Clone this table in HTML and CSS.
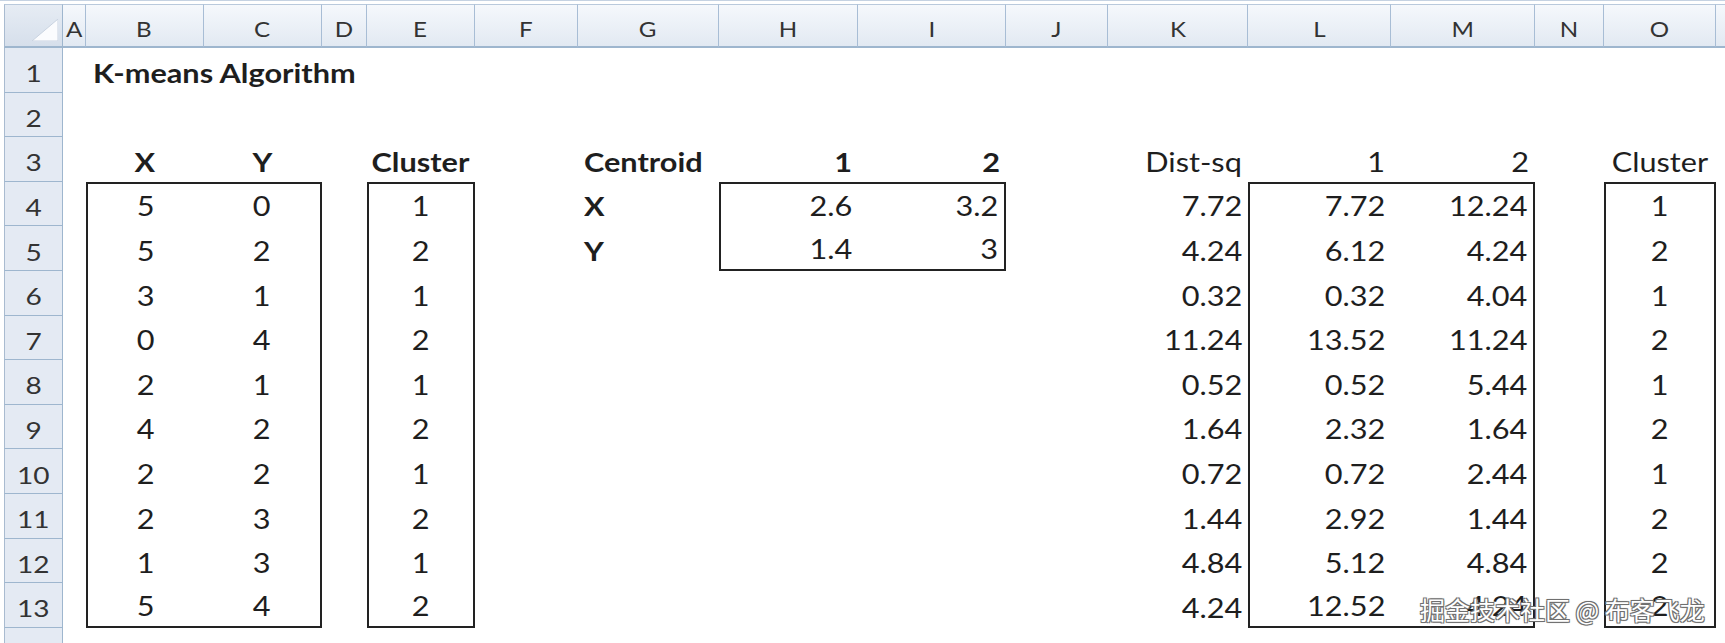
FILE: index.html
```html
<!DOCTYPE html>
<html>
<head>
<meta charset="utf-8">
<link rel="stylesheet" href="styles.css">
</head>
<body>
<div class="sheet">
  <div class="row head">
    <div class="corner"><svg class="tri" width="26" height="22" viewBox="0 0 26 22"><polygon points="0,22 26,22 26,0" fill="#fbfcfe" stroke="#c9d3e0" stroke-width="1"/></svg></div>
    <div class="ch"><span>A</span></div><div class="ch"><span>B</span></div><div class="ch"><span>C</span></div><div class="ch"><span>D</span></div><div class="ch"><span>E</span></div><div class="ch"><span>F</span></div><div class="ch"><span>G</span></div><div class="ch"><span>H</span></div><div class="ch"><span>I</span></div><div class="ch"><span>J</span></div><div class="ch"><span>K</span></div><div class="ch"><span>L</span></div><div class="ch"><span>M</span></div><div class="ch"><span>N</span></div><div class="ch"><span>O</span></div><div class="ch last"></div>
  </div>

  <div class="row">
    <div class="rh"><span>1</span></div><div></div><div class="c l b title"><span>K-means Algorithm</span></div><div></div><div></div><div></div><div></div><div></div><div></div><div></div><div></div><div></div><div></div><div></div><div></div><div></div><div></div>
  </div>

  <div class="row">
    <div class="rh"><span>2</span></div><div></div><div></div><div></div><div></div><div></div><div></div><div></div><div></div><div></div><div></div><div></div><div></div><div></div><div></div><div></div><div></div>
  </div>

  <div class="row">
    <div class="rh"><span>3</span></div><div></div>
    <div class="c m b"><span>X</span></div><div class="c m b"><span>Y</span></div><div></div><div class="c m b"><span>Cluster</span></div><div></div>
    <div class="c l b"><span>Centroid</span></div><div class="c r b"><span>1</span></div><div class="c r b"><span>2</span></div><div></div>
    <div class="c r"><span>Dist-sq</span></div><div class="c r"><span>1</span></div><div class="c r"><span>2</span></div><div></div><div class="c m"><span>Cluster</span></div><div></div>
  </div>

  <div class="row">
    <div class="rh"><span>4</span></div><div></div>
    <div class="c m bl bt"><span>5</span></div><div class="c m br bt"><span>0</span></div><div></div><div class="c m bl br bt"><span>1</span></div><div></div>
    <div class="c l b"><span>X</span></div><div class="c r bl bt"><span>2.6</span></div><div class="c r br bt"><span>3.2</span></div><div></div>
    <div class="c r"><span>7.72</span></div><div class="c r bl bt"><span>7.72</span></div><div class="c r br bt"><span>12.24</span></div><div></div><div class="c m bl br bt"><span>1</span></div><div></div>
  </div>

  <div class="row">
    <div class="rh"><span>5</span></div><div></div>
    <div class="c m bl"><span>5</span></div><div class="c m br"><span>2</span></div><div></div><div class="c m bl br"><span>2</span></div><div></div>
    <div class="c l b"><span>Y</span></div><div class="c r bl bb"><span>1.4</span></div><div class="c r br bb"><span>3</span></div><div></div>
    <div class="c r"><span>4.24</span></div><div class="c r bl"><span>6.12</span></div><div class="c r br"><span>4.24</span></div><div></div><div class="c m bl br"><span>2</span></div><div></div>
  </div>

  <div class="row">
    <div class="rh"><span>6</span></div><div></div>
    <div class="c m bl"><span>3</span></div><div class="c m br"><span>1</span></div><div></div><div class="c m bl br"><span>1</span></div><div></div>
    <div></div><div></div><div></div><div></div>
    <div class="c r"><span>0.32</span></div><div class="c r bl"><span>0.32</span></div><div class="c r br"><span>4.04</span></div><div></div><div class="c m bl br"><span>1</span></div><div></div>
  </div>

  <div class="row">
    <div class="rh"><span>7</span></div><div></div>
    <div class="c m bl"><span>0</span></div><div class="c m br"><span>4</span></div><div></div><div class="c m bl br"><span>2</span></div><div></div>
    <div></div><div></div><div></div><div></div>
    <div class="c r"><span>11.24</span></div><div class="c r bl"><span>13.52</span></div><div class="c r br"><span>11.24</span></div><div></div><div class="c m bl br"><span>2</span></div><div></div>
  </div>

  <div class="row">
    <div class="rh"><span>8</span></div><div></div>
    <div class="c m bl"><span>2</span></div><div class="c m br"><span>1</span></div><div></div><div class="c m bl br"><span>1</span></div><div></div>
    <div></div><div></div><div></div><div></div>
    <div class="c r"><span>0.52</span></div><div class="c r bl"><span>0.52</span></div><div class="c r br"><span>5.44</span></div><div></div><div class="c m bl br"><span>1</span></div><div></div>
  </div>

  <div class="row">
    <div class="rh"><span>9</span></div><div></div>
    <div class="c m bl"><span>4</span></div><div class="c m br"><span>2</span></div><div></div><div class="c m bl br"><span>2</span></div><div></div>
    <div></div><div></div><div></div><div></div>
    <div class="c r"><span>1.64</span></div><div class="c r bl"><span>2.32</span></div><div class="c r br"><span>1.64</span></div><div></div><div class="c m bl br"><span>2</span></div><div></div>
  </div>

  <div class="row">
    <div class="rh"><span>10</span></div><div></div>
    <div class="c m bl"><span>2</span></div><div class="c m br"><span>2</span></div><div></div><div class="c m bl br"><span>1</span></div><div></div>
    <div></div><div></div><div></div><div></div>
    <div class="c r"><span>0.72</span></div><div class="c r bl"><span>0.72</span></div><div class="c r br"><span>2.44</span></div><div></div><div class="c m bl br"><span>1</span></div><div></div>
  </div>

  <div class="row">
    <div class="rh"><span>11</span></div><div></div>
    <div class="c m bl"><span>2</span></div><div class="c m br"><span>3</span></div><div></div><div class="c m bl br"><span>2</span></div><div></div>
    <div></div><div></div><div></div><div></div>
    <div class="c r"><span>1.44</span></div><div class="c r bl"><span>2.92</span></div><div class="c r br"><span>1.44</span></div><div></div><div class="c m bl br"><span>2</span></div><div></div>
  </div>

  <div class="row">
    <div class="rh"><span>12</span></div><div></div>
    <div class="c m bl"><span>1</span></div><div class="c m br"><span>3</span></div><div></div><div class="c m bl br"><span>1</span></div><div></div>
    <div></div><div></div><div></div><div></div>
    <div class="c r"><span>4.84</span></div><div class="c r bl"><span>5.12</span></div><div class="c r br"><span>4.84</span></div><div></div><div class="c m bl br"><span>2</span></div><div></div>
  </div>

  <div class="row">
    <div class="rh"><span>13</span></div><div></div>
    <div class="c m bl bb"><span>5</span></div><div class="c m br bb"><span>4</span></div><div></div><div class="c m bl br bb"><span>2</span></div><div></div>
    <div></div><div></div><div></div><div></div>
    <div class="c r"><span>4.24</span></div><div class="c r bl bb"><span>12.52</span></div><div class="c r br bb"><span>4.24</span></div><div></div><div class="c m bl br bb"><span>2</span></div><div></div>
  </div>

  <div class="row">
    <div class="rh"></div>
  </div>

  <div class="watermark">掘金技术社区 @ 布客飞龙</div>
</div>
</body>
</html>
```

FILE: styles.css
```css
html, body {
  margin: 0;
  padding: 0;
  background: #ffffff;
}

.sheet {
  position: relative;
  width: 1725px;
  height: 643px;
  overflow: hidden;
  padding-top: 3px;
  box-sizing: border-box;
  background: #ffffff;
  border-top: 1px solid #c5d2e2;
  font-family: "Lato", "Open Sans", sans-serif;
  color: #222;
}

.row {
  display: grid;
  grid-template-columns: 63px 23px 117.5px 118.5px 44.5px 108.5px 103px 141px 139px 148px 102px 140px 143px 144px 69px 112px 1fr;
  height: 44.6px;
}

.row.head {
  height: 44px;
}

.corner {
  margin-left: 4px;
  border-left: 1px solid #a9bbd0;
  border-right: 1px solid #9eb6ce;
  border-bottom: 2px solid #9eb6ce;
  border-top: 1px solid #b9c9dc;
  background: linear-gradient(#e6ecf4, #d6dfeb);
  display: flex;
  align-items: flex-end;
  justify-content: flex-end;
  padding: 0 4px 5px 0;
  box-sizing: border-box;
}

.tri {
  display: block;
}

.ch {
  display: flex;
  align-items: center;
  justify-content: center;
  padding-top: 6px;
  box-sizing: border-box;
  background: linear-gradient(#f5f8fc, #e2e9f2);
  border-top: 1px solid #b9c9dc;
  border-right: 1px solid #a8bdd5;
  border-bottom: 2px solid #9eb6ce;
  font-size: 21px;
  color: #333;
  overflow: hidden;
}

.ch span {
  display: inline-block;
  transform: scaleX(1.15);
}

.ch.last {
  border-right: none;
}

.rh {
  margin-left: 4px;
  border-left: 1px solid #a9bbd0;
  border-right: 1px solid #9eb6ce;
  border-bottom: 1px solid #9eb6ce;
  background: #e4eaf3;
  display: flex;
  align-items: center;
  justify-content: center;
  padding-top: 7px;
  box-sizing: border-box;
  font-size: 23px;
  color: #333;
}

.rh span {
  display: inline-block;
  transform: scaleX(1.22);
}

.c {
  display: flex;
  align-items: flex-end;
  padding: 0 6px 5px 6px;
  box-sizing: border-box;
  font-size: 26px;
  line-height: 30px;
  white-space: nowrap;
  color: #1e1e1e;
}

.c span {
  display: inline-block;
  transform: scaleX(1.18);
}

.c.l { justify-content: flex-start; }
.c.m { justify-content: center; }
.c.r { justify-content: flex-end; }
.c.b { font-weight: 700; }

.c.l span { transform-origin: left center; }
.c.m span { transform-origin: center center; }
.c.r span { transform-origin: right center; }

.title {
  overflow: visible;
  padding-left: 7px;
}

.bl { border-left: 2px solid #222; }
.br { border-right: 2px solid #222; }
.bt { border-top: 2px solid #222; }
.bb { border-bottom: 2px solid #222; }

.watermark {
  position: absolute;
  left: 1420px;
  top: 592px;
  font-family: "Noto Sans CJK SC", sans-serif;
  font-size: 25px;
  line-height: 32px;
  color: #ffffff;
  white-space: nowrap;
  text-shadow: 1px 1px 0 #6f6f6f, -1px -1px 0 #6f6f6f, 1px -1px 0 #6f6f6f, -1px 1px 0 #6f6f6f, 0 0 2px #444;
}
```
